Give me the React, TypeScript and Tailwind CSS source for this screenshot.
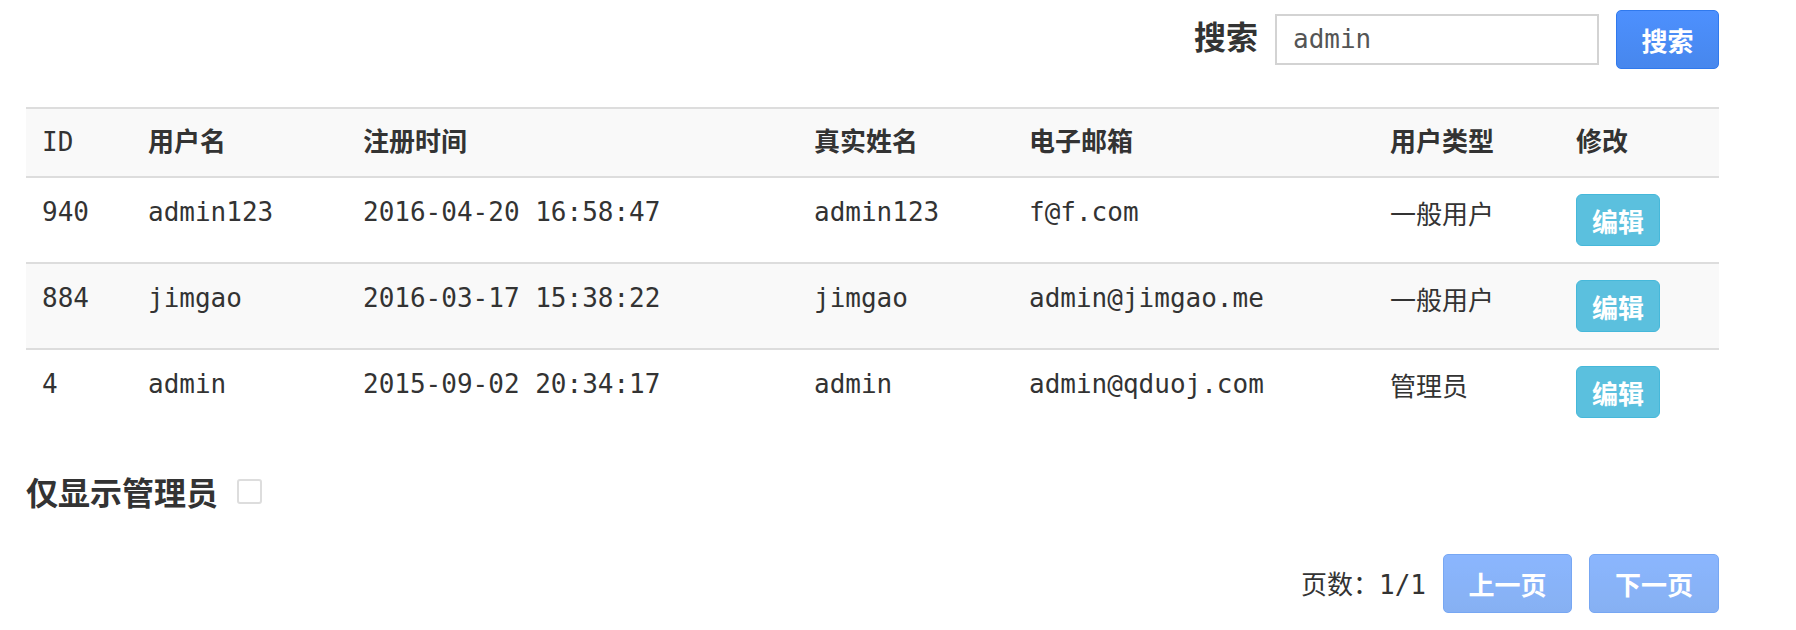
import React from 'react';

const mono = "font-['DejaVu_Sans_Mono','Noto_Sans_CJK_SC',monospace]";
const cjk = "font-['Noto_Sans_CJK_SC','Noto_Sans',sans-serif]";

interface UserRow {
  id: number;
  username: string;
  createdAt: string;
  realName: string;
  email: string;
  userType: string;
}

const users: UserRow[] = [
  { id: 940, username: 'admin123', createdAt: '2016-04-20 16:58:47', realName: 'admin123', email: 'f@f.com', userType: '一般用户' },
  { id: 884, username: 'jimgao', createdAt: '2016-03-17 15:38:22', realName: 'jimgao', email: 'admin@jimgao.me', userType: '一般用户' },
  { id: 4, username: 'admin', createdAt: '2015-09-02 20:34:17', realName: 'admin', email: 'admin@qduoj.com', userType: '管理员' },
];

const columns = [
  { label: 'ID', width: 'w-[106px]' },
  { label: '用户名', width: 'w-[215px]' },
  { label: '注册时间', width: 'w-[451px]' },
  { label: '真实姓名', width: 'w-[215px]' },
  { label: '电子邮箱', width: 'w-[361px]' },
  { label: '用户类型', width: 'w-[186px]' },
  { label: '修改', width: 'w-[159px]' },
];

function BlueButton({ children, disabled, className }: { children: React.ReactNode; disabled?: boolean; className: string }) {
  return (
    <button
      className={`flex items-center justify-center rounded-[5px] border border-[#3079ed] bg-linear-to-b from-[#4d90fe] to-[#4787ed] text-[26px] font-bold text-white ${cjk} ${
        disabled ? 'opacity-65' : ''
      } ${className}`}
    >
      {children}
    </button>
  );
}

export default function App() {
  return (
    <div className={`w-[1796px] h-[630px] bg-white text-[#333] pl-[26px] pr-[77px] ${cjk}`}>
      {/* search */}
      <div className="flex items-center justify-end pt-[10px]">
        <span className="text-[32px] font-bold leading-[46px] mb-[10px]">搜索</span>
        <div className={`ml-[17px] w-[324px] h-[51px] border-2 border-[#d3d3d3] pl-[16px] flex items-center text-[26px] text-[#555] ${mono}`}>
          admin
        </div>
        <BlueButton className="ml-[17px] w-[103px] h-[59px]">搜索</BlueButton>
      </div>

      {/* user table */}
      <table className={`mt-[38px] w-[1693px] table-fixed border-collapse border-t-2 border-[#ddd] text-[26px] leading-[37px] ${mono}`}>
        <thead>
          <tr className="bg-[#f9f9f9] border-b-2 border-[#ddd]">
            {columns.map((col) => (
              <th
                key={col.label}
                className={`${col.width} px-[16px] py-[15px] text-left align-top ${col.label === 'ID' ? 'font-normal' : 'font-bold'}`}
              >
                {col.label}
              </th>
            ))}
          </tr>
        </thead>
        <tbody>
          {users.map((u, i) => (
            <tr key={u.id} className={`${i > 0 ? 'border-t-2 border-[#ddd]' : ''} ${i === 1 ? 'bg-[#f9f9f9]' : ''}`}>
              <td className="px-[16px] py-[16px] align-top">{u.id}</td>
              <td className="px-[16px] py-[16px] align-top">{u.username}</td>
              <td className="px-[16px] py-[16px] align-top">{u.createdAt}</td>
              <td className="px-[16px] py-[16px] align-top">{u.realName}</td>
              <td className="px-[16px] py-[16px] align-top">{u.email}</td>
              <td className={`px-[16px] py-[16px] align-top ${cjk}`}>{u.userType}</td>
              <td className="px-[16px] py-[16px] align-top">
                <button className={`flex items-center justify-center w-[84px] h-[52px] rounded-[6px] border border-[#46b8da] bg-[#5bc0de] text-white text-[26px] font-bold ${cjk}`}>
                  编辑
                </button>
              </td>
            </tr>
          ))}
        </tbody>
      </table>

      {/* admin filter */}
      <div className="mt-[34px] flex items-center">
        <span className="text-[32px] font-bold leading-[46px]">仅显示管理员</span>
        <span className="ml-[19px] w-[25px] h-[25px] border-2 border-[#ddd] rounded-[3px] bg-white" />
      </div>

      {/* pagination */}
      <div className="mt-[40px] flex items-center justify-end">
        <span className="text-[26px] leading-[37px]">
          页数：<span className={mono}>1/1</span>
        </span>
        <BlueButton disabled className="ml-[17px] w-[129px] h-[59px]">上一页</BlueButton>
        <BlueButton disabled className="ml-[17px] w-[130px] h-[59px]">下一页</BlueButton>
      </div>
    </div>
  );
}
